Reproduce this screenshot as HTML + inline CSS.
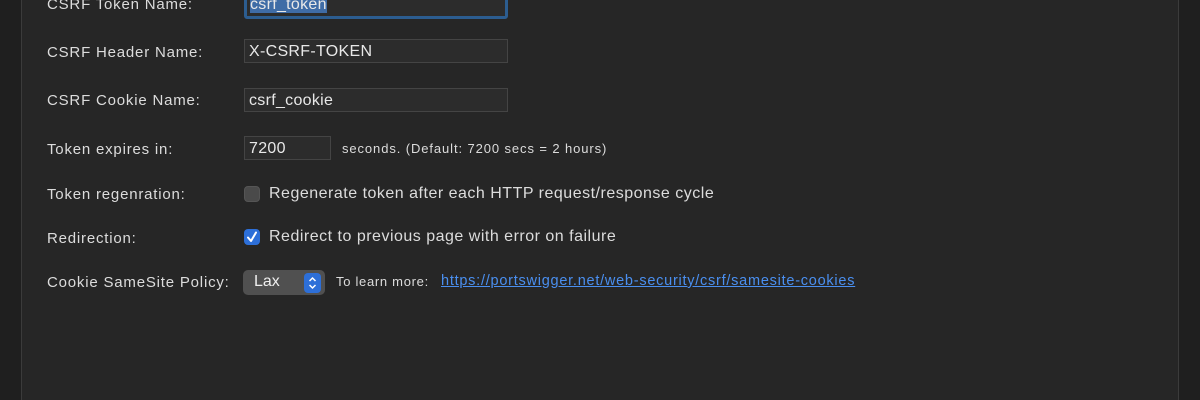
<!DOCTYPE html>
<html><head><style>
body{margin:0;width:1200px;height:400px;background:#1f1f1f;position:relative;overflow:hidden;font-family:"Liberation Sans",sans-serif;color:#dcdcdc}
.panel{position:absolute;left:21px;top:0;width:1156px;height:400px;background:#262626;border-left:1px solid #3b3b3b;border-right:1px solid #3b3b3b}
.l{position:absolute;left:47px;font-size:15px;letter-spacing:0.8px;color:#dcdcdc}
.f{position:absolute;left:244px;height:24px;background:#2c2c2c;border:1px solid #444;font-size:16px;letter-spacing:0.3px;color:#e8e8e8;line-height:24px;padding-left:4px;box-sizing:border-box;width:264px}
.t{position:absolute;font-size:14px;color:#dcdcdc}
.cb{position:absolute;left:244px;width:16px;height:16px;border-radius:4px;box-sizing:border-box}
a{color:#4a8ff0}
</style></head><body>
<div class="panel"></div>
<div class="l" style="top:-4px">CSRF Token Name:</div>
<div class="f" style="top:-8px;height:27px;border:3px solid #2c5d90;border-radius:3px;line-height:20px;padding-left:3px"><span style="background:#3f6ca6">csrf_token</span></div>
<div class="l" style="top:44px">CSRF Header Name:</div>
<div class="f" style="top:39px">X-CSRF-TOKEN</div>
<div class="l" style="top:92px">CSRF Cookie Name:</div>
<div class="f" style="top:88px">csrf_cookie</div>
<div class="l" style="top:141px">Token expires in:</div>
<div class="f" style="top:136px;width:87px">7200</div>
<div class="t" style="left:342px;top:141px;font-size:13px;letter-spacing:0.9px">seconds. (Default: 7200 secs = 2 hours)</div>
<div class="l" style="top:186px">Token regenration:</div>
<div class="cb" style="top:186px;background:#4a4a4a;border:1px solid #555"></div>
<div class="t" style="left:269px;top:185px;font-size:16px;letter-spacing:0.5px">Regenerate token after each HTTP request/response cycle</div>
<div class="l" style="top:230px">Redirection:</div>
<div class="cb" style="top:229px;background:#2d6fd8"><svg width="16" height="16" viewBox="0 0 16 16" style="position:absolute;left:0;top:0"><path d="M4 8.5 L7 12 L12 3.5" stroke="#fff" stroke-width="2" fill="none" stroke-linecap="round" stroke-linejoin="round"/></svg></div>
<div class="t" style="left:269px;top:228px;font-size:16px;letter-spacing:0.5px">Redirect to previous page with error on failure</div>
<div class="l" style="top:274px">Cookie SameSite Policy:</div>
<div style="position:absolute;left:243px;top:270px;width:82px;height:25px;background:#505050;border-radius:5px"></div>
<div class="t" style="left:254px;top:273px;font-size:16px;color:#eee">Lax</div>
<div style="position:absolute;left:304px;top:273px;width:17px;height:20px;background:#2d6fd8;border-radius:4px"><svg width="17" height="20" viewBox="0 0 17 20"><path d="M5.5 8 L8.5 5 L11.5 8 M5.5 12 L8.5 15 L11.5 12" stroke="#fff" stroke-width="1.5" fill="none"/></svg></div>
<div class="t" style="left:336px;top:274px;font-size:13px;letter-spacing:0.7px">To learn more:</div>
<div class="t" style="left:441px;top:273px;font-size:14.5px;letter-spacing:0.75px"><a href="#">https://portswigger.net/web-security/csrf/samesite-cookies</a></div>
</body></html>
